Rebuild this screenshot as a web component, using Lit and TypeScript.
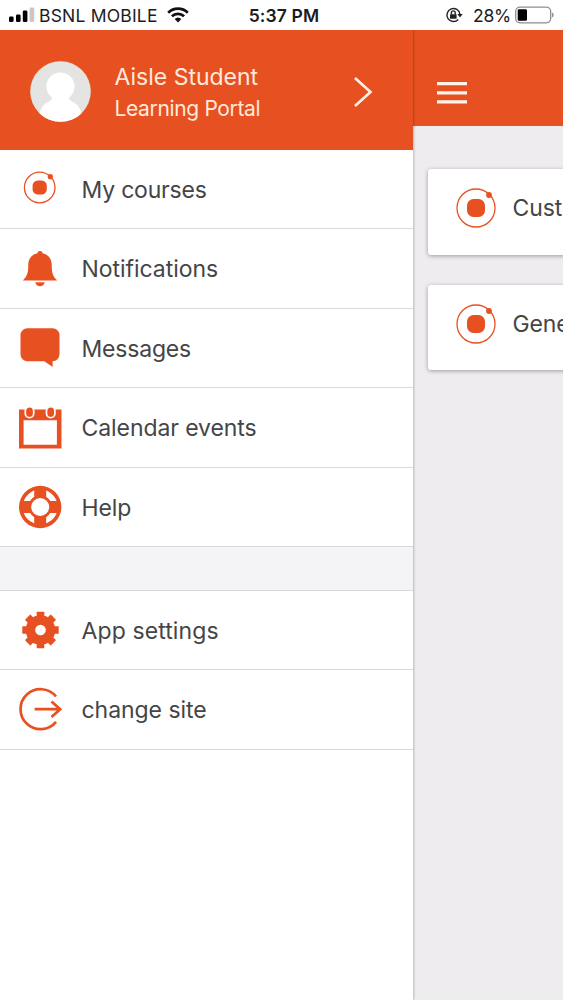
import { LitElement, html, css, svg } from "lit";
import { customElement } from "lit/decorators.js";

const bell = svg`<path d="M22 4c1.600 0 2.400.9 2.500 2.300C30.500 7.600 33.600 12 33.700 17.500c.1 8 .8 11.500 5.500 16H4.800c4.700-4.500 5.400-8 5.500-16C10.400 12 13.500 7.600 19.500 6.300 19.600 4.900 20.400 4 22 4z"/><path d="M17.300 35.300h9.400c-.5 2.500-2.400 4-4.700 4s-4.200-1.500-4.700-4z"/>`;

const message = svg`<path d="M9.500 2.300h25a7 7 0 0 1 7 7v19a7 7 0 0 1-6.900 7V41l-8.300-5.700H9.500a7 7 0 0 1-7-7v-19a7 7 0 0 1 7-7z"/>`;

const calendar = svg`<path fill-rule="evenodd" d="M1 3.500h42.500v39H1zM5.600 14.300v24.400h33.300v-24.400z"/><rect class="ring" x="7.300" y=".6" width="8.400" height="11" rx="4.200"/><rect class="ring" x="28.500" y=".6" width="8.400" height="11" rx="4.200"/>`;

const lifebuoy = svg`<circle cx="22.200" cy="22" r="21.200"/><circle class="windows" cx="22.200" cy="22" r="14.600"/><path d="M16.200 3h12v38h-12zM3.200 16h38v12h-38z"/><circle cx="22.200" cy="22" r="11.300"/><circle class="white" cx="22.200" cy="22" r="9"/>`;

const gear = svg`${[0, 45, 90, 135].map(
  (a) => svg`<rect x="18.700" y="3.800" width="7.600" height="36.400" rx=".5" transform="rotate(${a} 22.500 22)"/>`
)}<circle cx="22.500" cy="22" r="14.800"/><circle class="white" cx="22.500" cy="22" r="5.300"/>`;

const leave = svg`<path class="line" d="M38 9.500a20 20 0 1 0 0 25.400M16.600 22.200H42M33.500 14.500l8.700 7.700-8.700 7.700"/>`;

const orbit = svg`<circle class="thin" cx="21.700" cy="20.500" r="15.300"/><circle cx="32.300" cy="9.700" r="2.600"/><rect x="14.600" y="13.400" width="14.200" height="14.200" rx="5.200"/>`;

@customElement("app-root")
export class AppRoot extends LitElement {
  static styles = css`
    :host {
      display: flex;
      flex-direction: column;
      height: 1000px;
      overflow: hidden;
      background: #fff;
      font-family: Inter, "Liberation Sans", sans-serif;
      color: #454547;
    }
    svg { display: block; flex: none; }
    span { white-space: nowrap; }
    .status {
      height: 30px;
      flex: none;
      display: grid;
      grid-template-columns: 1fr auto 1fr;
      align-items: center;
      font-size: 17.500px;
      line-height: 28px;
      color: #1c1c1e;
      box-sizing: border-box;
      padding: 0 9px;
    }
    .left, .right { display: flex; align-items: center; }
    .right { justify-content: flex-end; }
    .carrier { margin: 2px 9px 0 4px; letter-spacing: 0.2px; }
    .time { font-weight: 600; margin: 2px 0 0 5px; letter-spacing: 0.15px; }
    .percent { margin: 2px 4px 0 10px; letter-spacing: -0.2px; }
    .main { flex: 1; display: flex; min-height: 0; }
    .drawer {
      width: 412.500px;
      flex: none;
      background: #fff;
      position: relative;
      z-index: 1;
      box-shadow: 0 0 3px rgba(0, 0, 0, 0.4);
      clip-path: inset(0 -8px 0 0);
    }
    .profile {
      height: 120px;
      background: #e75122;
      color: #ffe9dc;
      display: flex;
      align-items: center;
      box-sizing: border-box;
      padding: 3px 40px 0 29.500px;
    }
    .names { flex: 1; display: flex; flex-direction: column; margin: 2px 0 0 24px; }
    .name { font-size: 23px; line-height: 32px; }
    .portal { font-size: 21px; line-height: 32px; letter-spacing: -0.35px; }
    .row {
      height: 79.450px;
      box-sizing: border-box;
      border-bottom: 1.500px solid #d9d9dc;
      display: flex;
      align-items: center;
      padding-left: 18px;
      font-size: 23px;
    }
    .row span { margin: 1.200px 0 0 19.500px; }
    .gap { height: 43.500px; box-sizing: border-box; background: #f4f3f6; border-bottom: 1px solid #d9d9dc; }
    .icon { fill: #e75122; width: 44px; height: 44px; }
    .white { fill: #fff; }
    .ring { stroke: #fff; stroke-width: 1.700; }
    .windows { fill: none; stroke: #fff; stroke-width: 5.800; }
    .line { fill: none; stroke: #e75122; stroke-width: 2.700; }
    .thin { fill: none; stroke: #e75122; stroke-width: 1.300; }
    .page { flex: 1; min-width: 0; overflow: hidden; background: #eeecef; }
    .bar { height: 96px; background: #e75122; display: flex; align-items: center; box-sizing: border-box; padding: 30px 0 0 24.500px; }
    .cards { padding: 43px 0 0 15.500px; display: flex; flex-direction: column; gap: 30px; }
    .card {
      height: 85.500px;
      width: 200px;
      background: #fff;
      border-radius: 3px;
      box-shadow: 0 1px 4px rgba(0, 0, 0, 0.35);
      display: flex;
      align-items: center;
      box-sizing: border-box;
      padding: 0 0 7px 28px;
      font-size: 23px;
    }
    .card span { margin-left: 16.500px; letter-spacing: -0.1px; }
  `;

  row(icon: unknown, label: string, spacing: number) {
    return html`<div class="row">
      <svg class="icon" viewBox="0 0 44 44">${icon}</svg><span style="letter-spacing:${spacing}px">${label}</span>
    </div>`;
  }

  card(label: string) {
    return html`<div class="card">
      <svg width="40" height="40" viewBox="0 0 40 40" fill="#e75122">
        <circle class="thin" cx="20" cy="20" r="19" /><circle cx="33" cy="7" r="2.900" />
        <rect x="11" y="11" width="18" height="18" rx="6.500" />
      </svg><span>${label}</span>
    </div>`;
  }

  render() {
    return html`
      <div class="status">
        <div class="left">
          <svg width="26" height="16" viewBox="0 0 26 16">
            <rect x="0" y="9.500" width="4.600" height="5.500" rx="1.300" /><rect x="7" y="7.500" width="4.600" height="7.500" rx="1.300" />
            <rect x="13.800" y="3.500" width="4.600" height="11.500" rx="1.300" /><rect x="20.600" y="0.500" width="4.600" height="14.500" rx="1.300" fill="#c8c8cb" />
          </svg>
          <span class="carrier">BSNL MOBILE</span>
          <svg width="22" height="16" viewBox="0 0 22 16" fill="none" stroke="#111" stroke-width="2.700">
            <path d="M1.200 5.700a14 14 0 0 1 19.600 0M4.900 9.300a8.800 8.800 0 0 1 12.200 0" /><path d="M7.600 12a5 5 0 0 1 6.800 0L11 15.400z" fill="#111" stroke="none" />
          </svg>
        </div>
        <span class="time">5:37 PM</span>
        <div class="right">
          <svg width="18" height="18" viewBox="0 0 18 18" fill="none" stroke="#222" stroke-width="1.400">
            <path d="M13.200 13.400A6.500 6.500 0 1 1 14.900 8.200" /><path d="M12.300 8h5.400l-2.700 3.400z" fill="#222" stroke="none" />
            <rect x="5" y="8.200" width="6.600" height="4.600" rx=".6" fill="#222" stroke="none" /><path d="M6.400 8.500V6.800a1.900 1.900 0 0 1 3.800 0v1.700" />
          </svg>
          <span class="percent">28%</span>
          <svg width="39" height="18" viewBox="0 0 39 18">
            <rect x=".7" y="1.200" width="35" height="15.600" rx="4.200" fill="none" stroke="#8e8e93" stroke-width="1.300" />
            <rect x="2.700" y="3.300" width="9.300" height="11.400" rx="1.300" /><path d="M37 6.500c2.200.8 2.200 4.200 0 5z" fill="#8e8e93" />
          </svg>
        </div>
      </div>
      <div class="main">
        <div class="drawer">
          <div class="profile">
            <svg width="61" height="61" viewBox="0 0 61 61">
              <defs><clipPath id="face"><circle cx="30.500" cy="30.500" r="30.300" /></clipPath></defs>
              <g clip-path="url(#face)">
                <rect width="61" height="61" fill="#e4e4e2" />
                <circle cx="30.500" cy="25.500" r="14" fill="#fff" />
                <path d="M23 35h15c1 4 3 5 6 6.500 5 3 7 8 7.500 12V62h-42v-8.500c.5-4 2.500-9 7.500-12 3-1.500 5-2.500 6-6.500z" fill="#fff" />
              </g>
            </svg>
            <div class="names"><span class="name">Aisle Student</span><span class="portal">Learning Portal</span></div>
            <svg width="20" height="32" viewBox="0 0 20 32" fill="none" stroke="#fff0e6" stroke-width="2.600"><path d="M2 2l15.500 14L2 30" /></svg>
          </div>
          ${this.row(orbit, "My courses", -0.2)} ${this.row(bell, "Notifications", -0.05)}
          ${this.row(message, "Messages", -0.2)} ${this.row(calendar, "Calendar events", -0.08)}
          ${this.row(lifebuoy, "Help", -0.1)}
          <div class="gap"></div>
          ${this.row(gear, "App settings", 0.1)} ${this.row(leave, "change site", -0.05)}
        </div>
        <div class="page">
          <div class="bar">
            <svg width="30" height="22" viewBox="0 0 30 22" fill="#fff4ec"><path d="M0 0h30v3.200H0zM0 9.200h30v3.200H0zM0 18.200h30v3.200H0z" /></svg>
          </div>
          <div class="cards">${this.card("Cust")} ${this.card("Gene")}</div>
        </div>
      </div>
    `;
  }
}
